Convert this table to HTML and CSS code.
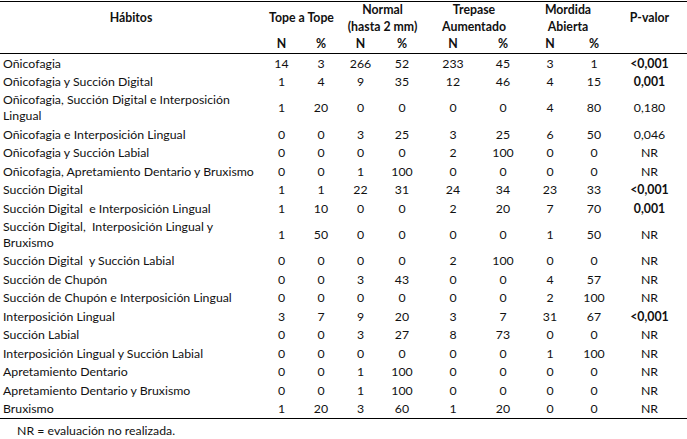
FILE: index.html
```html
<!DOCTYPE html>
<html lang="es">
<head>
<meta charset="utf-8">
<title>Hábitos</title>
<link rel="stylesheet" href="styles.css">
</head>
<body>
<table class="tbl">
  <colgroup>
    <col class="c-hab"><col class="c-n1"><col class="c-p1"><col class="c-n2"><col class="c-p2"><col class="c-n3"><col class="c-p3"><col class="c-n4"><col class="c-p4"><col class="c-pv">
  </colgroup>
  <thead>
    <tr class="h1">
      <th>Hábitos</th>
      <th colspan="2">Tope a Tope</th>
      <th colspan="2">Normal<br>(hasta 2 mm)</th>
      <th colspan="2">Trepase<br>Aumentado</th>
      <th colspan="2">Mordida<br>Abierta</th>
      <th>P-valor</th>
    </tr>
    <tr class="h2">
      <th></th>
      <th>N</th><th>%</th><th>N</th><th>%</th><th>N</th><th>%</th><th>N</th><th>%</th>
      <th></th>
    </tr>
  </thead>
  <tbody>
    <tr><td>Oñicofagia</td><td>14</td><td>3</td><td>266</td><td>52</td><td>233</td><td>45</td><td>3</td><td>1</td><td class="b">&lt;0,001</td></tr>
    <tr><td>Oñicofagia y Succión Digital</td><td>1</td><td>4</td><td>9</td><td>35</td><td>12</td><td>46</td><td>4</td><td>15</td><td class="b">0,001</td></tr>
    <tr class="dbl"><td>Oñicofagia, Succión Digital e Interposición<br>Lingual</td><td>1</td><td>20</td><td>0</td><td>0</td><td>0</td><td>0</td><td>4</td><td>80</td><td>0,180</td></tr>
    <tr><td>Oñicofagia e Interposición Lingual</td><td>0</td><td>0</td><td>3</td><td>25</td><td>3</td><td>25</td><td>6</td><td>50</td><td>0,046</td></tr>
    <tr><td>Oñicofagia y Succión Labial</td><td>0</td><td>0</td><td>0</td><td>0</td><td>2</td><td>100</td><td>0</td><td>0</td><td>NR</td></tr>
    <tr><td>Oñicofagia, Apretamiento Dentario y Bruxismo</td><td>0</td><td>0</td><td>1</td><td>100</td><td>0</td><td>0</td><td>0</td><td>0</td><td>NR</td></tr>
    <tr><td>Succión Digital</td><td>1</td><td>1</td><td>22</td><td>31</td><td>24</td><td>34</td><td>23</td><td>33</td><td class="b">&lt;0,001</td></tr>
    <tr><td>Succión Digital&nbsp; e Interposición Lingual</td><td>1</td><td>10</td><td>0</td><td>0</td><td>2</td><td>20</td><td>7</td><td>70</td><td class="b">0,001</td></tr>
    <tr class="dbl"><td>Succión Digital,&nbsp; Interposición Lingual y<br>Bruxismo</td><td>1</td><td>50</td><td>0</td><td>0</td><td>0</td><td>0</td><td>1</td><td>50</td><td>NR</td></tr>
    <tr><td>Succión Digital&nbsp; y Succión Labial</td><td>0</td><td>0</td><td>0</td><td>0</td><td>2</td><td>100</td><td>0</td><td>0</td><td>NR</td></tr>
    <tr><td>Succión de Chupón</td><td>0</td><td>0</td><td>3</td><td>43</td><td>0</td><td>0</td><td>4</td><td>57</td><td>NR</td></tr>
    <tr><td>Succión de Chupón e Interposición Lingual</td><td>0</td><td>0</td><td>0</td><td>0</td><td>0</td><td>0</td><td>2</td><td>100</td><td>NR</td></tr>
    <tr><td>Interposición Lingual</td><td>3</td><td>7</td><td>9</td><td>20</td><td>3</td><td>7</td><td>31</td><td>67</td><td class="b">&lt;0,001</td></tr>
    <tr><td>Succión Labial</td><td>0</td><td>0</td><td>3</td><td>27</td><td>8</td><td>73</td><td>0</td><td>0</td><td>NR</td></tr>
    <tr><td>Interposición Lingual y Succión Labial</td><td>0</td><td>0</td><td>0</td><td>0</td><td>0</td><td>0</td><td>1</td><td>100</td><td>NR</td></tr>
    <tr><td>Apretamiento Dentario</td><td>0</td><td>0</td><td>1</td><td>100</td><td>0</td><td>0</td><td>0</td><td>0</td><td>NR</td></tr>
    <tr><td>Apretamiento Dentario y Bruxismo</td><td>0</td><td>0</td><td>1</td><td>100</td><td>0</td><td>0</td><td>0</td><td>0</td><td>NR</td></tr>
    <tr><td>Bruxismo</td><td>1</td><td>20</td><td>3</td><td>60</td><td>1</td><td>20</td><td>0</td><td>0</td><td>NR</td></tr>
  </tbody>
</table>
<p class="note">NR = evaluación no realizada.</p>
</body>
</html>
```

FILE: styles.css
```css
html, body {
  margin: 0;
  padding: 0;
  background: #ffffff;
}
body {
  font-family: "Lato", "Liberation Sans", sans-serif;
  font-size: 12.3px;
  color: #111;
  padding-top: 1px;
}
.tbl {
  width: 687px;
  border-collapse: collapse;
  table-layout: fixed;
  border-top: 1px solid #000;
  border-bottom: 1px solid #000;
}
.c-hab { width: 262px; }
.c-n1 { width: 39px; }
.c-p1 { width: 40px; }
.c-n2 { width: 39px; }
.c-p2 { width: 44px; }
.c-n3 { width: 58px; }
.c-p3 { width: 42px; }
.c-n4 { width: 52px; }
.c-p4 { width: 36px; }
.c-pv { width: 75px; }
th, td {
  padding: 0;
  text-align: center;
  vertical-align: middle;
}
th {
  font-weight: 700;
}
thead .h1 th {
  height: 33px;
  line-height: 16.5px;
}
thead .h2 th {
  height: 18px;
  line-height: 16px;
}
thead .h2 {
  border-bottom: 1px solid #000;
}
tbody td {
  height: 18.5px;
  line-height: 15.5px;
}
tbody td:first-child {
  text-align: left;
  padding-left: 3px;
}
tbody tr.dbl td {
  height: 34px;
  line-height: 16px;
}
td.b {
  font-weight: 700;
}
.note {
  margin: 4px 0 0 17px;
  line-height: 16px;
}
```
